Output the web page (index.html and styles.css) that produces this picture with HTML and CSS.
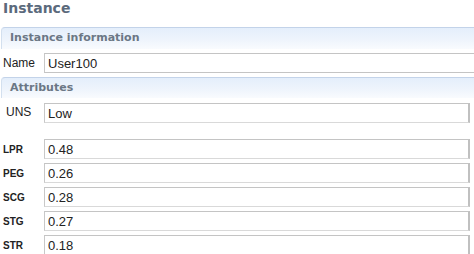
FILE: index.html
```html
<!DOCTYPE html>
<html lang="en">
<head>
<meta charset="UTF-8">
<meta name="viewport" content="width=device-width, initial-scale=1.0">
<title>Instance</title>
<link rel="stylesheet" href="styles.css">
</head>
<body>

<!-- Page title -->
<div class="title">Instance</div>

<!-- Instance information -->
<div class="section-head">Instance information</div>
<div class="row name-row">
    <label class="label plain">Name</label>
    <input class="field wide" type="text" value="User100" readonly>
</div>

<!-- Attributes -->
<div class="section-head second">Attributes</div>
<div class="row uns-row">
    <label class="label plain uns">UNS</label>
    <input class="field" type="text" value="Low" readonly>
</div>
<div class="row">
    <label class="label">LPR</label>
    <input class="field" type="text" value="0.48" readonly>
</div>
<div class="row">
    <label class="label">PEG</label>
    <input class="field" type="text" value="0.26" readonly>
</div>
<div class="row">
    <label class="label">SCG</label>
    <input class="field" type="text" value="0.28" readonly>
</div>
<div class="row">
    <label class="label">STG</label>
    <input class="field" type="text" value="0.27" readonly>
</div>
<div class="row">
    <label class="label">STR</label>
    <input class="field" type="text" value="0.18" readonly>
</div>

</body>
</html>
```

FILE: styles.css
```css
body {
    margin: 0;
    padding: 0;
    background: #ffffff;
    color: #222;
    font-family: 'Liberation Sans', Arial, sans-serif;
    overflow: hidden;
}

.title {
    height: 27px;
    padding-left: 3px;
    font-family: 'DejaVu Sans', sans-serif;
    font-weight: bold;
    font-size: 14px;
    line-height: 16px;
    color: #5b6a7c;
    box-sizing: border-box;
}

.section-head {
    height: 22px;
    margin-left: 1px;
    padding-left: 8px;
    box-sizing: border-box;
    border-top: 1px solid #c3d3e9;
    border-left: 1px solid #d3e0ef;
    border-radius: 4px 0 0 0;
    background: linear-gradient(to bottom, #e4eefb, #eef4fc 55%, #f9fbfe);
    font-family: 'DejaVu Sans', sans-serif;
    font-weight: bold;
    font-size: 11px;
    line-height: 20px;
    color: #6b7785;
}

.section-head.second {
    height: 21px;
    margin-top: 4px;
}

.row {
    display: flex;
    align-items: center;
    margin-top: 4px;
    margin-right: 4px;
}

.name-row {
    margin-right: -20px;
}

.uns-row {
    margin-top: 5px;
    margin-bottom: 16px;
    align-items: flex-start;
}

.row + .row {
    margin-top: 0;
}

.row:not(.uns-row) + .row {
    margin-top: 4px;
}

.label {
    width: 41px;
    padding-left: 3px;
    flex-shrink: 0;
    font-weight: bold;
    font-size: 10px;
    color: #222;
}

.label.plain {
    font-weight: normal;
    font-size: 12px;
}

.label.uns {
    width: 38px;
    padding-left: 6px;
    padding-top: 2px;
}

.field {
    flex: 1;
    min-width: 0;
    height: 20px;
    margin: 0;
    padding: 0 3px;
    box-sizing: border-box;
    border-top: 1px solid #c4c4c4;
    border-left: 1px solid #c8c8c8;
    border-right: 2px solid #c0c0c0;
    border-bottom: 1px solid #d9d9d9;
    background: #fff;
    font-family: 'Liberation Sans', Arial, sans-serif;
    font-size: 13px;
    color: #222;
    outline: none;
}

.field.wide {
    border-bottom-color: #c4c4c4;
}
```
